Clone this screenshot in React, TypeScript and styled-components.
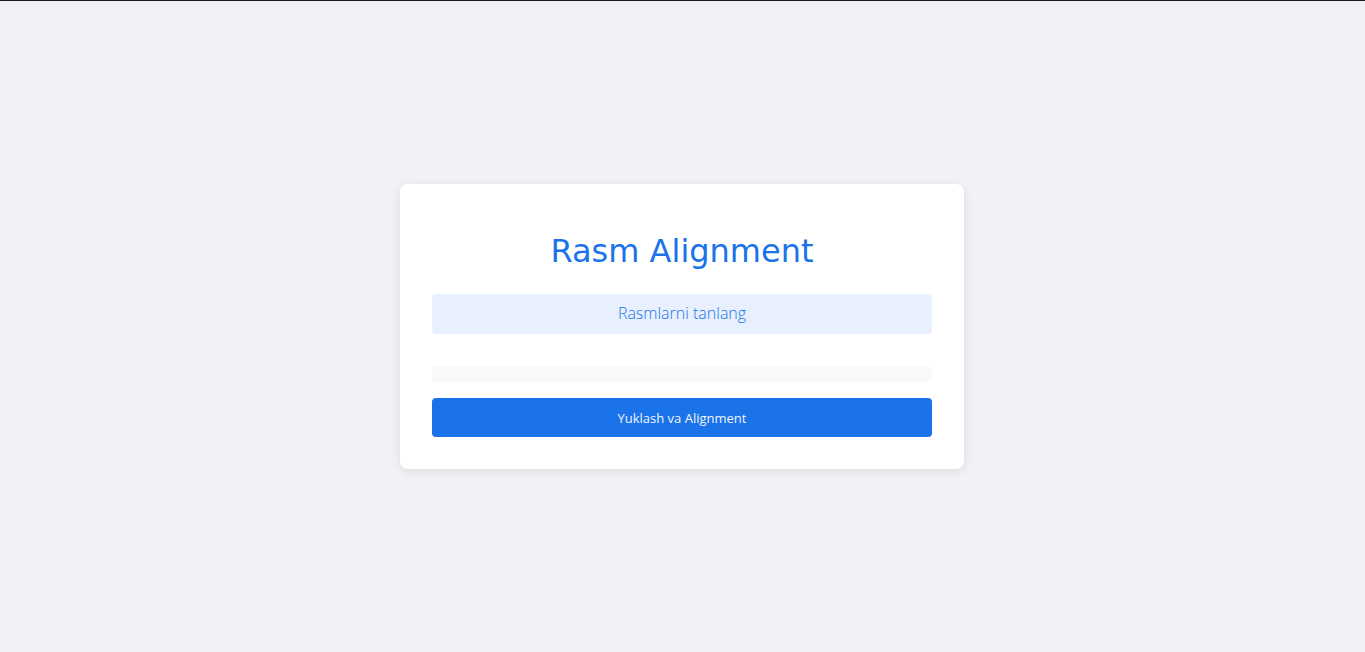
import React from 'react';
import styled, { createGlobalStyle } from 'styled-components';

const GlobalStyle = createGlobalStyle`
    html, body {
        margin: 0;
        padding: 0;
    }
    body {
        background: #f0f2f5;
        border-top: 1px solid #16181c;
        font-family: 'Open Sans', 'Noto Sans', sans-serif;
    }
`;

const Page = styled.main`
    min-height: calc(100vh - 1px);
    display: flex;
    align-items: center;
    justify-content: center;
    padding-right: 1px;
`;

const Card = styled.section`
    width: 500px;
    padding: 32px;
    background: #ffffff;
    border-radius: 8px;
    box-shadow: 0 2px 10px rgba(0, 0, 0, 0.1);
    display: flex;
    flex-direction: column;
`;

const Title = styled.h1`
    margin: 15px 0 23px;
    font-family: 'DejaVu Sans', sans-serif;
    font-size: 32px;
    font-weight: 400;
    line-height: 40px;
    text-align: center;
    color: #1a73e8;
`;

const PickLabel = styled.label`
    height: 40px;
    box-sizing: border-box;
    padding-bottom: 3px;
    display: flex;
    align-items: center;
    justify-content: center;
    background: #e8f0fe;
    border-radius: 4px;
    color: #1a73e8;
    font-size: 16px;
    font-weight: 300;
    cursor: pointer;
`;

const Progress = styled.div`
    height: 16px;
    margin: 32px 0 16px;
    background: #f8f9fa;
    border-radius: 4px;
`;

const SubmitButton = styled.button`
    height: 39px;
    border: none;
    border-radius: 4px;
    background: #1a73e8;
    color: #f1f5fe;
    font-family: 'Open Sans', sans-serif;
    font-size: 13px;
    cursor: pointer;
`;

export default function App() {
    return (
        <>
            <GlobalStyle />
            <Page>
                <Card>
                    <Title>Rasm Alignment</Title>
                    <PickLabel>Rasmlarni tanlang</PickLabel>
                    <Progress />
                    <SubmitButton>Yuklash va Alignment</SubmitButton>
                </Card>
            </Page>
        </>
    );
}
